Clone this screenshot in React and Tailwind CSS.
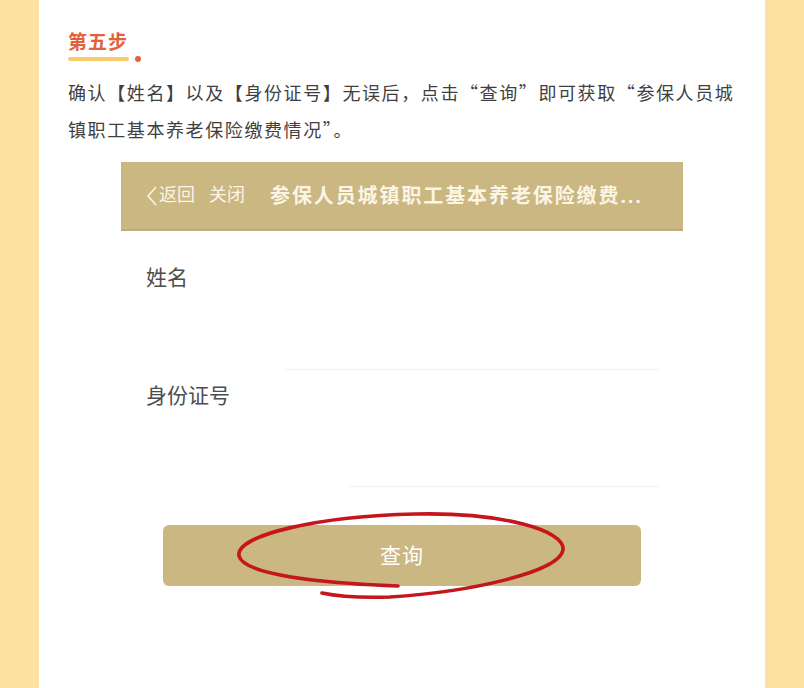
export default function App() {
  const cjk = { fontFamily: '"Liberation Sans", "Noto Sans CJK SC", sans-serif' };
  const zh = { fontFamily: '"Noto Sans CJK SC", sans-serif' };

  return (
    <div className="h-[688px] w-full overflow-hidden bg-[#fde1a3] flex justify-center" style={cjk}>
      <div className="w-[726px] h-full bg-white px-[29px] pt-[30px]">
        {/* step heading */}
        <div className="flex items-end gap-[6px]">
          <div className="flex flex-col">
            <h3 className="text-[19px] leading-[26px] font-bold text-[#e2613b] tracking-[1px]">第五步</h3>
            <div className="h-[4px] w-[61px] mt-[1px] bg-[#f8cc66] rounded-full" />
          </div>
          <div className="w-[6px] h-[6px] rounded-full bg-[#e2613b] mb-[-1px]" />
        </div>

        <p className="mt-[13px] text-[18px] leading-[37px] tracking-[1.6px] text-[#3f3f3f]" style={zh}>
          确认【姓名】以及【身份证号】无误后，点击“查询”即可获取“参保人员城镇职工基本养老保险缴费情况”。
        </p>

        {/* screenshot of the query page */}
        <div className="mt-[14px] mx-auto w-[562px]">
          <div className="h-[69px] bg-[#cbb782] border-b-[2px] border-[#bcab80] flex items-center pl-[25px] text-[#fbf5e6]">
            <svg width="12" height="22" viewBox="0 0 12 22" className="mr-[1px]">
              <path d="M10 2 L2 11 L10 20" fill="none" stroke="#fbf5e6" strokeWidth="1.6" />
            </svg>
            <span className="text-[18px]">返回</span>
            <span className="text-[18px] ml-[14px]">关闭</span>
            <span className="text-[20px] font-bold tracking-[1.9px] ml-[25px]">参保人员城镇职工基本养老保险缴费...</span>
          </div>

          <div className="pt-[33px] pl-[25px] text-[21px] leading-[28px] text-[#4d4d4d]">姓名</div>
          <div className="mt-[77px] ml-[164px] mr-[23px] border-b border-[#f1f1f1]" />

          <div className="pt-[12px] pl-[25px] text-[21px] leading-[28px] text-[#4d4d4d]">身份证号</div>
          <div className="mt-[76px] ml-[227px] mr-[23px] border-b border-[#f1f1f1]" />

          <div className="relative mt-[38px] mx-[42px]">
            <button className="w-full h-[61px] rounded-[6px] bg-[#cbb782] text-[21px] text-white tracking-[1px]">
              查询
            </button>
            <svg className="absolute left-[-42px] top-[-38px] pointer-events-none" width="562" height="120" viewBox="121 487 562 120">
              <path
                d="M398 586 C320 583 244 575 239 556 C235 535 320 516 415 514 C500 512 566 530 563 550 C560 572 470 592 390 597 C360 598 336 596 322 593"
                fill="none"
                stroke="#c4161c"
                strokeWidth="3.6"
                strokeLinecap="round"
              />
            </svg>
          </div>
        </div>
      </div>
    </div>
  );
}
